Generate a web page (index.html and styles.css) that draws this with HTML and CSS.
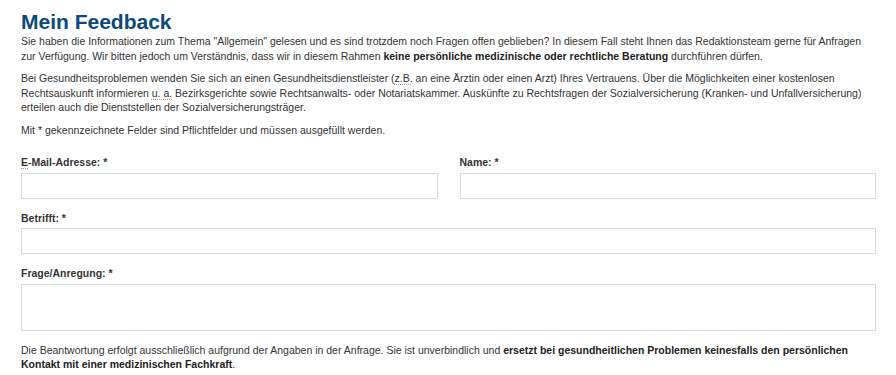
FILE: index.html
```html
<!DOCTYPE html>
<html lang="de">
<head>
  <meta charset="UTF-8">
  <title>Mein Feedback</title>
  <link rel="stylesheet" href="styles.css">
</head>
<body>
  <div class="page">
    <h1>Mein Feedback</h1>

    <p>Sie haben die Informationen zum Thema "Allgemein" gelesen und es sind trotzdem noch Fragen offen geblieben? In diesem Fall steht Ihnen das Redaktionsteam gerne für Anfragen zur Verfügung. Wir bitten jedoch um Verständnis, dass wir in diesem Rahmen <strong>keine persönliche medizinische oder rechtliche Beratung</strong> durchführen dürfen.</p>

    <p>Bei Gesundheitsproblemen wenden Sie sich an einen Gesundheitsdienstleister (<abbr title="zum Beispiel">z.B.</abbr> an eine Ärztin oder einen Arzt) Ihres Vertrauens. Über die Möglichkeiten einer kostenlosen Rechtsauskunft informieren <abbr title="unter anderem">u. a.</abbr> Bezirksgerichte sowie Rechtsanwalts- oder Notariatskammer. Auskünfte zu Rechtsfragen der Sozialversicherung (Kranken- und Unfallversicherung) erteilen auch die Dienststellen der Sozialversicherungsträger.</p>

    <p>Mit * gekennzeichnete Felder sind Pflichtfelder und müssen ausgefüllt werden.</p>

    <form class="feedback-form">
      <div class="row">
        <div class="field">
          <label for="email"><abbr title="Elektronische">E</abbr>-Mail-Adresse: *</label>
          <input type="text" id="email">
        </div>
        <div class="field">
          <label for="name">Name: *</label>
          <input type="text" id="name">
        </div>
      </div>

      <div class="field">
        <label for="subject">Betrifft: *</label>
        <input type="text" id="subject">
      </div>

      <div class="field">
        <label for="message">Frage/Anregung: *</label>
        <textarea id="message"></textarea>
      </div>
    </form>

    <p class="note">Die Beantwortung erfolgt ausschließlich aufgrund der Angaben in der Anfrage. Sie ist unverbindlich und <strong>ersetzt bei gesundheitlichen Problemen keinesfalls den persönlichen Kontakt mit einer medizinischen Fachkraft</strong>.</p>
  </div>
</body>
</html>
```

FILE: styles.css
```css
* {
  box-sizing: border-box;
  margin: 0;
  padding: 0;
}

body {
  font-family: "Liberation Sans", Arial, sans-serif;
  font-size: 10.5px;
  line-height: 14.5px;
  color: #333333;
  background: #ffffff;
}

.page {
  padding: 10px 20px 0 21px;
}

h1 {
  font-size: 21px;
  line-height: 24px;
  font-weight: bold;
  color: #0b4a7a;
}

p {
  margin-bottom: 8px;
}

strong {
  font-weight: bold;
  color: #222222;
}

abbr {
  text-decoration: underline dotted #999999;
  text-underline-offset: 2px;
}

.feedback-form {
  margin-top: 18px;
}

.row {
  display: flex;
  gap: 22px;
}

.row .field {
  flex: 1;
}

.field {
  margin-bottom: 12px;
}

label {
  display: block;
  font-weight: bold;
  color: #333333;
  margin-bottom: 3px;
}

input,
textarea {
  display: block;
  width: 100%;
  height: 26px;
  border: 1px solid #d3dbe2;
  background: #ffffff;
  font-family: inherit;
  font-size: 12px;
  padding: 4px 6px;
  outline: none;
  resize: none;
}

textarea {
  height: 47px;
}

.note {
  margin-top: 11px;
}
```
